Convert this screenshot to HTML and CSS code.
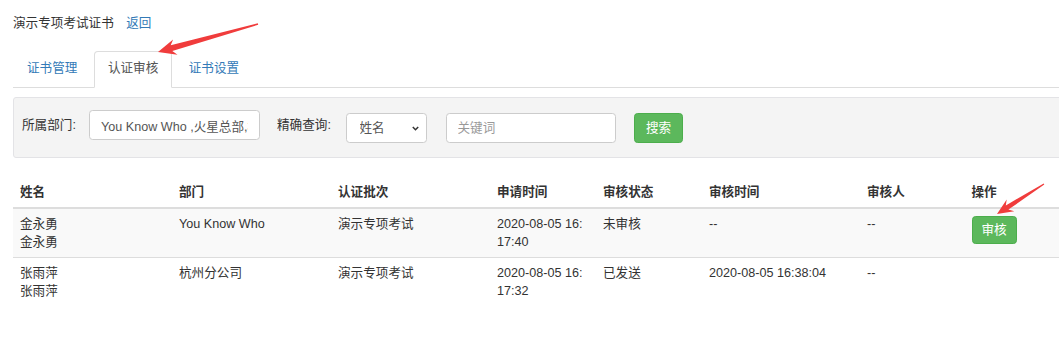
FILE: index.html
```html
<!DOCTYPE html>
<html lang="zh-CN">
<head>
<meta charset="utf-8">
<title>认证审核</title>
<link rel="stylesheet" href="styles.css">
</head>
<body>
<div class="page">
  <div class="title">演示专项考试证书<a class="back" href="#">返回</a></div>

  <ul class="tabs">
    <li><a href="#">证书管理</a></li>
    <li class="active"><a href="#">认证审核</a></li>
    <li><a href="#">证书设置</a></li>
  </ul>

  <form class="filter">
    <label class="lbl lbl-dept">所属部门:</label>
    <input class="ctl dept" type="text" value="You Know Who ,火星总部,杭州分公司">
    <label class="lbl lbl-query">精确查询:</label>
    <div class="select-wrap">
      <select class="ctl sel"><option>姓名</option><option>部门</option></select>
      <svg class="chev" width="7" height="5" viewBox="0 0 7 5"><path d="M0.8 0.9 L3.5 3.7 L6.2 0.9" fill="none" stroke="#333" stroke-width="1.5"/></svg>
    </div>
    <input class="ctl kw" type="text" placeholder="关键词">
    <button class="btn search" type="button">搜索</button>
  </form>

  <table class="list">
    <thead>
      <tr>
        <th class="c-name">姓名</th>
        <th class="c-dept">部门</th>
        <th class="c-batch">认证批次</th>
        <th class="c-apply">申请时间</th>
        <th class="c-status">审核状态</th>
        <th class="c-time">审核时间</th>
        <th class="c-user">审核人</th>
        <th class="c-op">操作</th>
      </tr>
    </thead>
    <tbody>
      <tr>
        <td><div>金永勇</div><div>金永勇</div></td>
        <td>You Know Who</td>
        <td>演示专项考试</td>
        <td>2020-08-05 16:17:40</td>
        <td>未审核</td>
        <td>--</td>
        <td>--</td>
        <td><button class="btn audit" type="button">审核</button></td>
      </tr>
      <tr>
        <td><div>张雨萍</div><div>张雨萍</div></td>
        <td>杭州分公司</td>
        <td>演示专项考试</td>
        <td>2020-08-05 16:17:32</td>
        <td>已发送</td>
        <td>2020-08-05 16:38:04</td>
        <td>--</td>
        <td></td>
      </tr>
    </tbody>
  </table>
</div>

<svg class="annot" width="1059" height="350" viewBox="0 0 1059 350">
  <polygon points="158,52 173.1,39.4 170.7,45.3 257.8,23.3 258.2,24.7 172.3,51.1 177.5,54.8" fill="#f03c3c"/>
  <polygon points="997,214 1006.7,199.5 1005.8,205.4 1043.7,183.5 1044.3,184.5 1008.4,209.6 1014.3,211.3" fill="#f03c3c"/>
</svg>
</body>
</html>
```

FILE: styles.css
```css
html {
  overflow: hidden;
}

body {
  margin: 0;
  position: relative;
  font-family: "Liberation Sans", "Noto Sans CJK SC", sans-serif;
  font-size: 12.6px;
  line-height: 18px;
  color: #333;
  background: #fff;
}

.page {
  width: 1060px;
  margin-left: 13px;
  padding-top: 14px;
}

a {
  color: #337ab7;
  text-decoration: none;
}

.title {
  line-height: 18px;
}

.back {
  margin-left: 12.5px;
}

/* tabs */
.tabs {
  display: flex;
  list-style: none;
  margin: 19px 0 0;
  padding: 0;
  border-bottom: 1px solid #ddd;
}

.tabs li {
  margin: 0 2.5px -1px 0;
}

.tabs a {
  display: block;
  padding: 8px 13px 11px;
  line-height: 16px;
  border: 1px solid transparent;
  border-radius: 4px 4px 0 0;
}

.tabs .active a {
  color: #555;
  background: #fff;
  border-color: #ddd #ddd transparent;
}

/* filter bar */
.filter {
  display: flex;
  align-items: flex-start;
  margin: 9px 0 18px;
  padding: 12px 0 14px 8px;
  background: #f4f4f4;
  border: 1px solid #e3e3e6;
  border-radius: 3px;
}

.lbl {
  line-height: 30px;
  white-space: nowrap;
}

.lbl-dept {
  width: 67px;
}

.lbl-query {
  width: 68.5px;
  margin-left: 17px;
  line-height: 31px;
}

.ctl {
  box-sizing: border-box;
  height: 30px;
  font: inherit;
  color: #555;
  background: #fff;
  border: 1px solid #ccc;
  border-radius: 3.6px;
  outline: none;
}

.dept {
  width: 171px;
  padding: 0 11px;
}

.select-wrap {
  position: relative;
  margin-top: 3px;
}

.sel {
  width: 81px;
  padding: 0 0 0 13px;
  appearance: none;
  -webkit-appearance: none;
}

.chev {
  position: absolute;
  right: 7.5px;
  top: 12.5px;
  pointer-events: none;
}

.kw {
  width: 170.5px;
  margin: 3px 0 0 19px;
  padding: 0 11px;
}

.kw::placeholder {
  color: #999;
}

.btn {
  font: inherit;
  color: #fff;
  background: #5cb85c;
  border: 1px solid #4cae4c;
  border-radius: 3.6px;
  cursor: pointer;
}

.search {
  box-sizing: border-box;
  height: 30px;
  margin: 3px 0 0 18px;
  padding: 0 11px;
}

/* table */
.list {
  width: 1060px;
  border-collapse: collapse;
  table-layout: fixed;
}

.list th {
  text-align: left;
  vertical-align: bottom;
  font-weight: bold;
  padding: 7px 7px 6px;
  line-height: 18px;
  border-bottom: 2px solid #ddd;
}

.list td {
  padding: 6px 7px;
  line-height: 18px;
  vertical-align: top;
  border-top: 1px solid #ddd;
  word-break: break-all;
}

.list tbody tr:nth-child(odd) td {
  background: #f9f9f9;
}

/* content widths (cell = width + 14px padding) */
.c-name, .c-dept, .c-batch { width: 145px; }
.c-apply, .c-status { width: 92px; }
.c-time { width: 144px; }
.c-user { width: 90.5px; }

.audit {
  display: block;
  box-sizing: border-box;
  height: 28px;
  margin-top: 1px;
  padding: 0 9px;
  font-size: 12.6px;
}

/* annotation arrows */
.annot {
  position: absolute;
  left: 0;
  top: 0;
  pointer-events: none;
}
```
